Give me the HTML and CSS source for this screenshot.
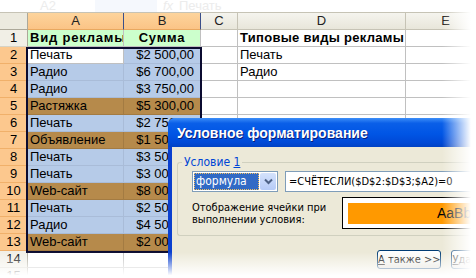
FILE: index.html
```html
<!DOCTYPE html>
<html lang="ru">
<head>
    <meta charset="UTF-8">
    <title>Условное форматирование</title>
    <link rel="stylesheet" href="styles.css">
</head>
<body>
<div class="screen">
    <!-- Formula bar (faded at the top edge) -->
    <div class="formula-bar">
        <span class="name-box">A2</span>
        <span class="name-drop"></span>
        <span class="fx">fx</span>
        <span class="fb-value">Печать</span>
    </div>

    <!-- Worksheet -->
    <div class="sheet">
        <div class="cell corner"></div>
        <div class="cell hd sel">A</div>
        <div class="cell hd sel">B</div>
        <div class="cell hd">C</div>
        <div class="cell hd">D</div>
        <div class="cell hd">E</div>

        <div class="cell rh">1</div>
        <div class="cell green bold wide center">Вид рекламы</div>
        <div class="cell green bold wide center">Сумма</div>
        <div class="cell"></div>
        <div class="cell bold">Типовые виды рекламы</div>
        <div class="cell"></div>

        <div class="cell rh sel">2</div>
        <div class="cell active">Печать</div>
        <div class="cell blue num">$2 500,00</div>
        <div class="cell"></div>
        <div class="cell">Печать</div>
        <div class="cell"></div>

        <div class="cell rh sel">3</div>
        <div class="cell blue">Радио</div>
        <div class="cell blue num">$6 700,00</div>
        <div class="cell"></div>
        <div class="cell">Радио</div>
        <div class="cell"></div>

        <div class="cell rh sel">4</div>
        <div class="cell blue">Радио</div>
        <div class="cell blue num">$3 750,00</div>
        <div class="cell"></div>
        <div class="cell"></div>
        <div class="cell"></div>

        <div class="cell rh sel">5</div>
        <div class="cell brown">Растяжка</div>
        <div class="cell brown num">$5 300,00</div>
        <div class="cell"></div>
        <div class="cell"></div>
        <div class="cell"></div>

        <div class="cell rh sel">6</div>
        <div class="cell blue">Печать</div>
        <div class="cell blue num">$2 750,00</div>
        <div class="cell"></div>
        <div class="cell"></div>
        <div class="cell"></div>

        <div class="cell rh sel">7</div>
        <div class="cell brown">Объявление</div>
        <div class="cell brown num">$1 500,00</div>
        <div class="cell"></div>
        <div class="cell"></div>
        <div class="cell"></div>

        <div class="cell rh sel">8</div>
        <div class="cell blue">Печать</div>
        <div class="cell blue num">$3 500,00</div>
        <div class="cell"></div>
        <div class="cell"></div>
        <div class="cell"></div>

        <div class="cell rh sel">9</div>
        <div class="cell blue">Печать</div>
        <div class="cell blue num">$3 000,00</div>
        <div class="cell"></div>
        <div class="cell"></div>
        <div class="cell"></div>

        <div class="cell rh sel">10</div>
        <div class="cell brown">Web-сайт</div>
        <div class="cell brown num">$8 000,00</div>
        <div class="cell"></div>
        <div class="cell"></div>
        <div class="cell"></div>

        <div class="cell rh sel">11</div>
        <div class="cell blue">Печать</div>
        <div class="cell blue num">$2 500,00</div>
        <div class="cell"></div>
        <div class="cell"></div>
        <div class="cell"></div>

        <div class="cell rh sel">12</div>
        <div class="cell blue">Радио</div>
        <div class="cell blue num">$4 500,00</div>
        <div class="cell"></div>
        <div class="cell"></div>
        <div class="cell"></div>

        <div class="cell rh sel">13</div>
        <div class="cell brown">Web-сайт</div>
        <div class="cell brown num">$2 000,00</div>
        <div class="cell"></div>
        <div class="cell"></div>
        <div class="cell"></div>

        <div class="cell rh">14</div>
        <div class="cell"></div>
        <div class="cell"></div>
        <div class="cell"></div>
        <div class="cell"></div>
        <div class="cell"></div>

        <div class="cell rh">15</div>
        <div class="cell"></div>
        <div class="cell"></div>
        <div class="cell"></div>
        <div class="cell"></div>
        <div class="cell"></div>

        <!-- selected range outline -->
        <div class="selection"></div>
    </div>

    <!-- Conditional formatting dialog -->
    <div class="dialog">
        <div class="title">Условное форматирование</div>
        <div class="dlg-body">
            <fieldset class="cond">
                <legend>Условие <u>1</u></legend>
                <div class="cond-row">
                    <div class="combo">
                        <span class="combo-text">формула</span>
                        <span class="combo-btn">
                            <svg width="9" height="7" viewBox="0 0 9 7"><path d="M1 1.5 L4.5 5 L8 1.5" fill="none" stroke="#4d6185" stroke-width="2"/></svg>
                        </span>
                    </div>
                    <div class="formula">=СЧЁТЕСЛИ($D$2:$D$3;$A2)=0</div>
                </div>
                <div class="cond-row2">
                    <div class="label">Отображение ячейки при<br>выполнении условия:</div>
                    <div class="preview">
                        <div class="sample">AaBbCcYyZz</div>
                    </div>
                </div>
            </fieldset>
            <div class="buttons">
                <button><u>А</u> также &gt;&gt;</button>
                <button><u>У</u>далить...</button>
            </div>
        </div>
    </div>

    <!-- faded edges of the screenshot -->
    <div class="fade-right"></div>
    <div class="fade-bottom"></div>
</div>
</body>
</html>
```

FILE: styles.css
```css
/* Excel 2003 screenshot with faded edges */
body {
    margin: 0;
    background-color: #fff;
    font-family: "Liberation Sans", Arial, sans-serif;
}
.screen {
    position: relative;
    width: 476px;
    height: 278px;
    overflow: hidden;
}

/* Formula bar */
.formula-bar {
    height: 12px;
    display: flex;
    align-items: flex-end;
    font-size: 13px;
    line-height: 12px;
    color: #ececec;
    overflow: hidden;
}
.name-box {
    margin-left: 40px;
    width: 55px;
}
.name-drop {
    width: 62px;
    height: 12px;
    background-color: #f5f8fd;
}
.fx {
    margin-left: 6px;
    font-style: italic;
    width: 12px;
}
.fb-value {
    margin-left: 4px;
}

/* Sheet grid */
.sheet {
    position: relative;
    display: grid;
    grid-template-columns: 28px 96px 77px 37px 168px 80px;
    grid-auto-rows: 17px;
    font-size: 13px;
    border-top: 1px solid #c6c3b5;
}
.cell {
    box-sizing: border-box;
    border-right: 1px solid #c0c0c0;
    border-bottom: 1px solid #c0c0c0;
    padding: 0 2px;
    line-height: 16px;
    white-space: nowrap;
    overflow: hidden;
    color: #000;
}
.corner {
    background-color: #eceadf;
    border-color: #aca899;
}
.hd {
    text-align: center;
    background: linear-gradient(#f5f4ee, #e8e6da);
    border-color: #c6c3b5;
    color: #222;
}
.hd.sel {
    background: linear-gradient(#fdd49c, #fbc486);
    border-right-color: #3b4f8a;
    border-bottom-color: #e8a860;
}
.rh {
    text-align: center;
    background-color: #f1efe6;
    border-right-color: #aca899;
    border-bottom-color: #d6d3c6;
    padding: 0;
}
.rh.sel {
    background-color: #fcc88e;
    border-right-color: #2a3f9a;
    border-bottom-color: #f0b06a;
}
.green {
    background-color: #ccffcc;
}
.blue {
    background-color: #b6cbe8;
    border-color: #a9bcd8;
}
.brown {
    background-color: #b68a4b;
    border-color: #a37b42;
}
.active {
    background-color: #fff;
}
.bold {
    font-weight: bold;
    letter-spacing: 0.3px;
}
.bold.wide {
    letter-spacing: 0.8px;
}
.center {
    text-align: center;
}
.num {
    text-align: right;
    padding-right: 6px;
}
.selection {
    position: absolute;
    left: 26px;
    top: 34px;
    width: 176px;
    height: 206px;
    box-sizing: border-box;
    border: 2px solid #0b0b30;
    pointer-events: none;
}

/* Dialog window */
.dialog {
    position: absolute;
    left: 168px;
    top: 118px;
    width: 330px;
    height: 175px;
    background-color: #ece9d8;
    border-left: 4px solid #0a3fcf;
    border-top-left-radius: 7px;
    font-family: "DejaVu Sans Condensed", Tahoma, sans-serif;
    font-size: 12px;
}
.title {
    height: 29px;
    box-sizing: border-box;
    line-height: 30px;
    color: #fff;
    font-family: "Liberation Sans", Arial, sans-serif;
    font-size: 14px;
    font-weight: bold;
    text-shadow: 1px 1px 0 #0a1e7a;
    background: linear-gradient(#3d8ef8 0%, #0a5fe8 18%, #0055e5 55%, #0049d6 85%, #0042c4 100%);
    border-top-left-radius: 6px;
    margin-left: -4px;
    padding-left: 9px;
}
.dlg-body {
    padding: 8px 0 0 5px;
}
.cond {
    margin: 0;
    padding: 2px 0 6px 14px;
    border: 1px solid #d0d0bf;
    border-radius: 3px;
    border-right: none;
}
.cond legend {
    color: #0046d5;
    padding: 0 2px;
    margin-left: -10px;
}
.cond-row {
    display: flex;
    gap: 7px;
    height: 21px;
}
.combo {
    display: flex;
    align-items: center;
    box-sizing: border-box;
    width: 86px;
    height: 21px;
    background-color: #fff;
    border: 1px solid #7f9db9;
    padding: 1px;
}
.combo-text {
    flex: 1;
    height: 17px;
    line-height: 15px;
    box-sizing: border-box;
    padding-left: 1px;
    color: #fff;
    font-size: 12px;
    background-color: #316ac5;
    border: 1px dotted #f0c060;
}
.combo-btn {
    width: 16px;
    height: 17px;
    margin-left: 1px;
    display: flex;
    align-items: center;
    justify-content: center;
    background: linear-gradient(#d4e2fc, #b6cbf7);
    border-radius: 2px;
}
.formula {
    flex: 1;
    box-sizing: border-box;
    height: 21px;
    background-color: #fff;
    border: 1px solid #7f9db9;
    border-right: none;
    padding-left: 3px;
    line-height: 19px;
    font-size: 11px;
    white-space: nowrap;
}
.cond-row2 {
    display: flex;
    margin-top: 5px;
}
.label {
    flex: none;
    width: 150px;
    padding-top: 5px;
    line-height: 12px;
    font-size: 11px;
    white-space: nowrap;
}
.preview {
    flex: 1;
    height: 32px;
    box-sizing: border-box;
    background-color: #fff;
    border: 1px solid #000;
    border-right: none;
    padding: 5px 0 5px 5px;
}
.sample {
    height: 21px;
    background-color: #ff9900;
    padding-left: 89px;
    line-height: 21px;
    font-family: "Liberation Sans", Arial, sans-serif;
    font-size: 14px;
    white-space: nowrap;
}
.buttons {
    display: flex;
    gap: 10px;
    margin-top: 14px;
    padding-left: 200px;
}
.buttons button {
    height: 19px;
    width: 72px;
    padding: 0;
    font-family: "DejaVu Sans Condensed", Tahoma, sans-serif;
    font-size: 11px;
    color: #000;
    background: linear-gradient(#ffffff, #f0f0ea 70%, #d8d6cc);
    border: 1px solid #003c74;
    border-radius: 3px;
    white-space: nowrap;
}

/* Edge fades */
.fade-right {
    position: absolute;
    top: 0;
    right: 0;
    width: 34px;
    height: 278px;
    background: linear-gradient(to right, rgba(255,255,255,0), #fff 85%);
}
.fade-bottom {
    position: absolute;
    left: 0;
    bottom: 0;
    width: 476px;
    height: 26px;
    background: linear-gradient(rgba(255,255,255,0), #fff 90%);
}
```
